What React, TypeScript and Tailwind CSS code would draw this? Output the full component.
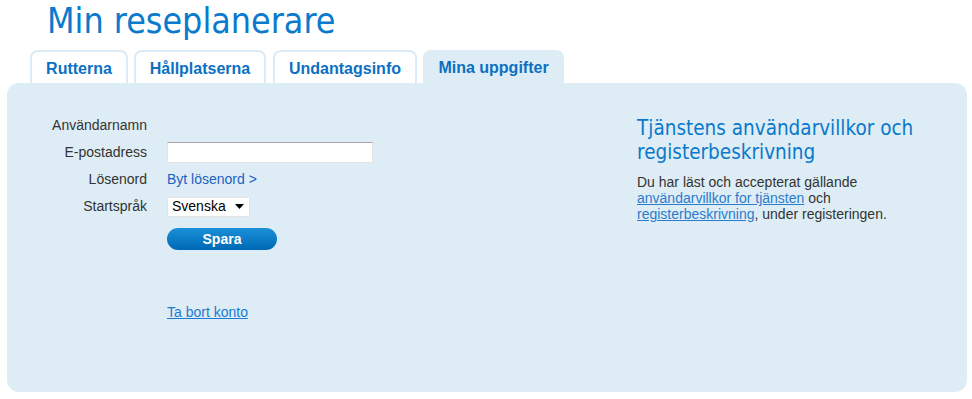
const tabs = [
  { label: "Rutterna", cls: "w-[98px]" },
  { label: "Hållplatserna", cls: "w-[132px] ml-[6px]" },
  { label: "Undantagsinfo", cls: "w-[144px] ml-[7px]" },
];

export default function App() {
  return (
    <div className="w-[972px] h-[399px] bg-white font-['Liberation_Sans',Arial,sans-serif] overflow-hidden">
      <h1 className="pl-[47px] h-[50px] text-[35.5px] leading-[42px] text-[#0a7bcc] font-['DejaVu_Sans_Condensed','DejaVu_Sans',sans-serif]">
        Min reseplanerare
      </h1>

      <div className="flex items-end pl-[30px] h-[33px]">
        {tabs.map((t) => (
          <div
            key={t.label}
            className={`${t.cls} h-[33px] flex items-center justify-center pt-[3px] bg-white border-2 border-b-0 border-[#dcebf5] rounded-t-[8px] text-[16px] font-bold text-[#0b70c3]`}
          >
            {t.label}
          </div>
        ))}
        <div className="w-[141px] ml-[6px] h-[33px] flex items-center justify-center pt-[3px] bg-[#deedf5] rounded-t-[8px] text-[16px] font-bold text-[#0b70c3]">
          Mina uppgifter
        </div>
      </div>

      <div className="mx-[7px] w-[960px] h-[309px] bg-[#deedf5] rounded-[12px] flex">
        <div className="w-[630px] pt-[29px]">
          <div className="grid grid-cols-[140px_auto] gap-x-5 text-[14px] text-[#333]">
            <div className="h-[27px] flex items-center justify-end">Användarnamn</div>
            <div />
            <div className="h-[27px] flex items-center justify-end">E-postadress</div>
            <div className="h-[27px] flex items-center">
              <input
                type="text"
                className="w-[206px] h-[21px] bg-white border border-[#e2e2e2] border-t-[#a9a9a9] rounded-[1px] outline-none"
              />
            </div>
            <div className="h-[27px] flex items-center justify-end">Lösenord</div>
            <div className="h-[27px] flex items-center">
              <a href="#" className="text-[#1d5fc5]">Byt lösenord &gt;</a>
            </div>
            <div className="h-[27px] flex items-center justify-end">Startspråk</div>
            <div className="h-[27px] flex items-center">
              <div className="w-[83px] h-[20px] bg-white border border-[#e3e3e3] flex items-center justify-between pl-[4px] pr-[5px] text-black">
                <span>Svenska</span>
                <svg width="9" height="5" viewBox="0 0 9 5">
                  <path d="M0 0h9L4.5 5z" fill="#000" />
                </svg>
              </div>
            </div>
            <div />
            <div className="pt-[8px]">
              <button className="w-[110px] h-[22px] rounded-full bg-gradient-to-b from-[#1a90d8] to-[#0068b4] text-white font-bold text-[14px] leading-[22px]">
                Spara
              </button>
            </div>
            <div />
            <div className="pt-[52px]">
              <a href="#" className="underline text-[#1a7ad0]">Ta bort konto</a>
            </div>
          </div>
        </div>

        <div className="pt-[33px] w-[310px]">
          <h2 className="text-[20.5px] leading-[24px] text-[#0a79cb] font-['DejaVu_Sans_Condensed','DejaVu_Sans',sans-serif]">
            Tjänstens användarvillkor och registerbeskrivning
          </h2>
          <p className="mt-[10px] text-[14px] leading-[16px] text-[#333]">
            Du har läst och accepterat gällande{" "}
            <a href="#" className="underline text-[#2a7ccc]">användarvillkor for tjänsten</a> och{" "}
            <a href="#" className="underline text-[#2a7ccc]">registerbeskrivning</a>, under registeringen.
          </p>
        </div>
      </div>
    </div>
  );
}
